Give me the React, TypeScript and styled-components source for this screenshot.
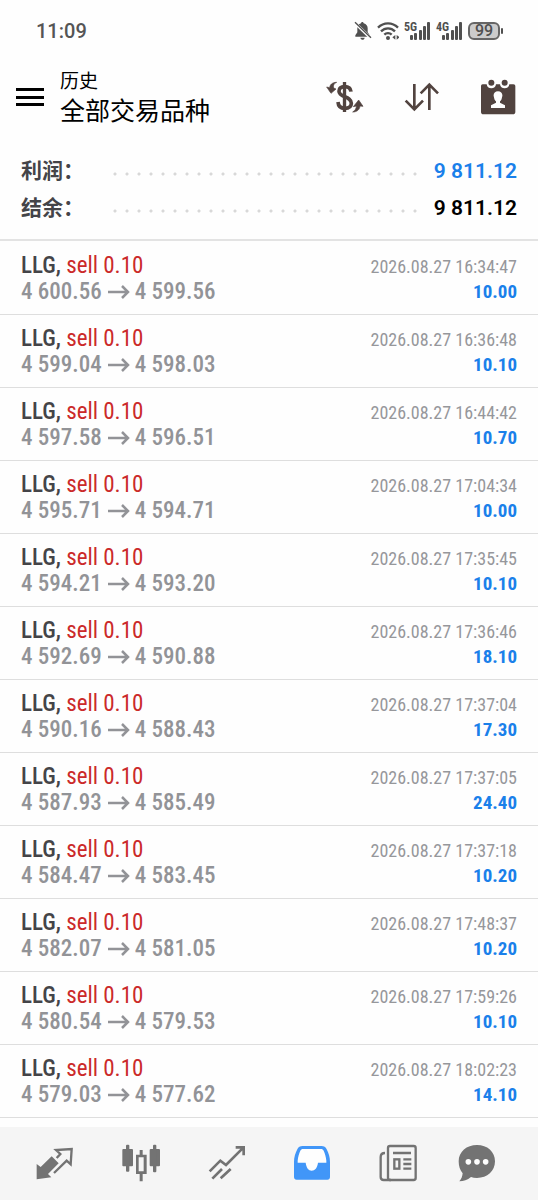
import React from 'react';
import styled, { createGlobalStyle } from 'styled-components';

const condensed = '"Roboto Condensed", "Liberation Sans Narrow", Roboto, "Noto Sans CJK SC", sans-serif';
const regular = 'Roboto, "Noto Sans CJK SC", sans-serif';

const GlobalStyle = createGlobalStyle`
  *, *::before, *::after { box-sizing: border-box; }
  body { margin: 0; background: #fefefe; color: #000; font-family: ${regular}; }
  h1, p, dl, dd, dt, ul { margin: 0; padding: 0; }
  svg { display: block; flex: none; }
`;

const Screen = styled.div`
  display: flex;
  flex-direction: column;
  min-height: 100vh;
`;

const StatusBar = styled.div`
  display: flex;
  align-items: center;
  justify-content: space-between;
  height: 62px;
  padding: 0 35px 0 36px;
  color: #555;
  font-size: 20px;
  font-weight: 500;
`;

const StatusIcons = styled.div`
  display: flex;
  align-items: center;
  gap: 5px;
  color: #505050;
`;

const Signal = styled.div`
  display: flex;
  align-items: flex-start;
  justify-content: flex-end;
  width: 27px;
  height: 18px;
  font: 700 12px/10px ${condensed};
  svg { margin-left: -7px; }
`;

const Battery = styled.div`
  display: flex;
  align-items: center;
  &::after {
    content: '';
    width: 2px;
    height: 6px;
    margin-left: 1px;
    border-radius: 1px;
    background: #505050;
  }
`;

const BatteryLevel = styled.span`
  width: 32px;
  height: 18px;
  border: 2px solid #666;
  border-radius: 6px;
  background: #ccc;
  font-size: 16px;
  line-height: 14px;
  text-align: center;
`;

const Header = styled.header`
  display: flex;
  align-items: center;
  height: 76px;
  padding: 0 22px 6px 14px;
`;

const IconButton = styled.button`
  display: grid;
  place-items: center;
  padding: 0;
  border: 0;
  background: none;
  color: #51433f;
  cursor: pointer;
`;

const MenuButton = styled(IconButton)`
  color: #000;
`;

const Titles = styled.div`
  flex: 1;
  padding: 4px 0 0 14px;
`;

const Overline = styled.p`
  font-size: 19px;
  line-height: 26px;
`;

const Title = styled.h1`
  font-size: 25px;
  font-weight: 400;
  line-height: 34px;
`;

const Actions = styled.div`
  display: flex;
  align-items: center;
  gap: 40px;
`;

const Summary = styled.dl`
  padding: 14px 21px 13px;
  border-bottom: 2px solid #e3e3e3;
`;

const SummaryRow = styled.div`
  display: flex;
  align-items: center;
  height: 37px;
`;

const SummaryLabel = styled.dt`
  width: 88px;
  padding-bottom: 4px;
  color: #444448;
  font-size: 21px;
  font-weight: 700;
`;

const Leader = styled.span`
  flex: 1;
  height: 4px;
  margin: 6px 16px 0 0;
  background: radial-gradient(circle, #d8d8d8 1px, transparent 2px) 0 0 / 12px 4px repeat-x;
`;

const SummaryValue = styled.dd<{ $accent?: boolean }>`
  color: ${(p) => (p.$accent ? '#1a80ea' : '#000')};
  font-size: 21px;
  font-weight: 600;
`;

const Deals = styled.ul`
  flex: 1;
  padding: 1px 0 9px;
  list-style: none;
`;

const Deal = styled.li`
  display: flex;
  justify-content: space-between;
  height: 73px;
  padding: 11px 21px 0;
  border-bottom: 1px solid #dedede;
  font-family: ${condensed};
  white-space: nowrap;
`;

const Column = styled.div<{ $end?: boolean }>`
  display: flex;
  flex-direction: column;
  align-items: ${(p) => (p.$end ? 'flex-end' : 'flex-start')};
  padding-top: ${(p) => (p.$end ? 1 : 0)}px;
`;

const Symbol = styled.p`
  color: #444448;
  font-size: 23px;
  font-weight: 500;
  line-height: 26px;
`;

const Side = styled.span`
  color: #cb2a2a;
  font-weight: 400;
`;

const Prices = styled.p`
  display: flex;
  align-items: center;
  gap: 5px;
  color: #929397;
  font-size: 23px;
  font-weight: 500;
  line-height: 26px;
`;

const Time = styled.time`
  color: #96979b;
  font-size: 18px;
  line-height: 25px;
`;

const Profit = styled.p`
  color: #1a80ea;
  font-size: 19px;
  font-weight: 700;
  line-height: 25px;
`;

const TabBar = styled.nav`
  position: sticky;
  bottom: 0;
  display: flex;
  height: 73px;
  padding: 0 25px 2px 12px;
  background: #f5f5f5;
`;

const Tab = styled(IconButton)<{ $active?: boolean }>`
  flex: 86 1 0;
  color: ${(p) => (p.$active ? '#4196f8' : '#737373')};
  &:last-child { flex-grow: 72; }
`;

const SignalBars = () => (
  <svg width="21" height="18" viewBox="0 0 21 18" fill="currentColor">
    <rect x="0" y="13" width="3" height="5" rx="1" />
    <rect x="4" y="11" width="3" height="7" rx="1" />
    <rect x="9" y="8" width="3" height="10" rx="1" />
    <rect x="13" y="4" width="3" height="14" rx="1" />
    <rect x="17" y="0" width="3" height="18" rx="1" />
  </svg>
);

const MutedBell = () => (
  <svg width="18" height="20" viewBox="0 0 54 60" fill="currentColor">
    <path d="M25 3c2 0 4 2 4 4 8 2 12 8 12 15v11l6 10v4H4v-4l6-9V22c0-8 4-13 11-15 0-2 2-4 4-4zM19 50h13c-1 4-3 6-6 6s-6-2-7-6z" />
    <path d="M3 6l48 46" stroke="#fefefe" strokeWidth="9" />
    <path d="M3 4l48 46" stroke="currentColor" strokeWidth="4" />
  </svg>
);

const Wifi = () => (
  <svg width="22" height="18" viewBox="0 0 66 54" fill="none" stroke="currentColor" strokeWidth="7">
    <path d="M3 17c17-17 43-17 60 0M12 28c12-12 30-12 42 0M22 38c6-6 16-6 22 0" />
    <circle cx="33" cy="48" r="6" fill="currentColor" stroke="none" />
    <path d="M46 46l9-7v14zM68 46l-9-7v14z" fill="currentColor" stroke="none" />
  </svg>
);

const MenuIcon = () => (
  <svg width="32" height="24" viewBox="0 0 32 24" fill="currentColor">
    <path d="M2 3h28v3H2zM2 11h28v3H2zM2 18h28v3H2z" />
  </svg>
);

const CurrencyIcon = () => (
  <svg width="38" height="36" viewBox="45 237 114 108" fill="none" stroke="currentColor">
    <path d="M120 275c-1-10-7-15-19-15-11 0-17 5-17 14 0 20 37 13 37 36 0 9-7 15-20 15-12 0-19-6-20-19" strokeWidth="11" />
    <path d="M100.500 246v90" strokeWidth="10" />
    <path d="M77 247c-9 4-11 10-9 17l7 3-15 13-13-19 9 2c1-9 8-16 21-16zM125 336c8-5 11-11 11-18l-9 2 16-20 13 19-9-1c-1 11-9 18-22 18z" fill="currentColor" strokeWidth="2" />
  </svg>
);

const SortIcon = () => (
  <svg width="36" height="36" viewBox="281 237 108 108" fill="none" stroke="currentColor" strokeWidth="8">
    <path d="M312 252v76M286 302l26 26 26-26M357 330v-76M331 280l26-26 26 26" />
  </svg>
);

const CalendarIcon = () => (
  <svg width="36" height="36" viewBox="511 235 108 108" fill="currentColor">
    <path fillRule="evenodd" d="M519 251h12c1 8 6 12 14 12s13-4 14-12h12c1 8 6 12 14 12s13-4 14-12h12c4 0 6 2 6 6v77c0 4-3 7-7 7h-89c-4 0-7-3-7-7v-77c0-4 2-6 5-6zM565 272c-9 0-14 6-13 14l2 8c1 4 3 6 5 8v4l-15 8v8h42v-8l-15-8v-4c2-2 4-4 5-8l2-8c1-8-4-14-13-14z" />
    <circle cx="545" cy="246" r="9" />
    <circle cx="585" cy="246" r="9" />
  </svg>
);

const TradeIcon = () => (
  <svg width="38" height="38" viewBox="108 102 114 114" fill="none" stroke="currentColor" strokeWidth="7">
    <path d="M110 162l12 9 33-32 21 21-32 32 10 10-44 6z" fill="currentColor" stroke="none" />
    <path d="M170 144l11-12-13-12 47-3-3 46-12-11-38 37" />
  </svg>
);

const CandlesIcon = () => (
  <svg width="40" height="38" viewBox="360 102 120 114" fill="currentColor">
    <rect x="364" y="117" width="32" height="52" rx="3" />
    <rect x="375" y="104" width="10" height="81" rx="3" />
    <rect x="446" y="117" width="31" height="52" rx="3" />
    <rect x="456" y="104" width="10" height="83" rx="3" />
    <path fillRule="evenodd" d="M416 120h9v14h12v58h-12v22h-9v-22h-11v-58h11zM413 142v42h15v-42z" />
  </svg>
);

const TrendIcon = () => (
  <svg width="38" height="38" viewBox="622 102 114 114" fill="none" stroke="currentColor" strokeWidth="8">
    <path d="M627 184l32-32 17 13 52-52M705 112h24v24M635 206l29-29M660 205l30-28" />
  </svg>
);

const InboxIcon = () => (
  <svg width="38" height="38" viewBox="69 101 114 114" fill="currentColor">
    <path d="M98 112h56l14 10 8 36-24 4-26 22-26-22-22-4 8-36z" fill="#fefefe" />
    <path fillRule="evenodd" d="M98 107h56c8 0 13 3 16 10 6 12 10 24 10 38v45c0 5-3 8-8 8H80c-5 0-8-3-8-8v-45c0-14 4-26 10-38 3-7 8-10 16-10zM99 116c-4 0-6 2-8 5-4 9-7 19-8 30v6h24c2 15 8 24 18 24s17-9 19-24h25v-6c-1-11-4-21-8-30-2-3-4-5-8-5z" />
  </svg>
);

const NewsIcon = () => (
  <svg width="38" height="38" viewBox="328 101 114 114" fill="none" stroke="currentColor" strokeWidth="7">
    <rect x="355" y="107" width="83" height="102" rx="6" />
    <path d="M346 128c-10 0-13 4-13 12v60c0 6 3 9 9 9h22M370 128h54M401 147h24M401 161h24M401 175h24" />
    <rect x="374" y="147" width="15" height="28" />
  </svg>
);

const ChatIcon = () => (
  <svg width="38" height="38" viewBox="565 101 114 114" fill="currentColor">
    <path d="M590 146h64v18h-64z" fill="#fefefe" />
    <path fillRule="evenodd" d="M622 104c31 0 54 20 54 49s-23 50-54 50c-7 0-13-1-18-3-11 9-22 13-35 13 6-6 9-14 10-24-8-9-12-21-12-36 0-29 24-49 55-49zM596 146a8 8 0 1 0 0 17 8 8 0 0 0 0-17zM622 146a8 8 0 1 0 0 17 8 8 0 0 0 0-17zM648 146a8 8 0 1 0 0 17 8 8 0 0 0 0-17z" />
  </svg>
);

const Arrow = () => (
  <svg width="23" height="16" viewBox="0 0 23 16" fill="none" stroke="currentColor" strokeWidth="2.500">
    <path d="M1 8h20M15 2l6 6-6 6" />
  </svg>
);

const deals = [
  ['4 600.56', '4 599.56', '16:34:47', '10.00'],
  ['4 599.04', '4 598.03', '16:36:48', '10.10'],
  ['4 597.58', '4 596.51', '16:44:42', '10.70'],
  ['4 595.71', '4 594.71', '17:04:34', '10.00'],
  ['4 594.21', '4 593.20', '17:35:45', '10.10'],
  ['4 592.69', '4 590.88', '17:36:46', '18.10'],
  ['4 590.16', '4 588.43', '17:37:04', '17.30'],
  ['4 587.93', '4 585.49', '17:37:05', '24.40'],
  ['4 584.47', '4 583.45', '17:37:18', '10.20'],
  ['4 582.07', '4 581.05', '17:48:37', '10.20'],
  ['4 580.54', '4 579.53', '17:59:26', '10.10'],
  ['4 579.03', '4 577.62', '18:02:23', '14.10'],
];

const tabs = [
  { label: '交易', Icon: TradeIcon },
  { label: '行情', Icon: CandlesIcon },
  { label: '图表', Icon: TrendIcon },
  { label: '历史', Icon: InboxIcon, active: true },
  { label: '新闻', Icon: NewsIcon },
  { label: '消息', Icon: ChatIcon },
];

export default function App() {
  return (
    <Screen>
      <GlobalStyle />
      <StatusBar>
        <span>11:09</span>
        <StatusIcons>
          <MutedBell />
          <Wifi />
          <Signal>5G<SignalBars /></Signal>
          <Signal>4G<SignalBars /></Signal>
          <Battery><BatteryLevel>99</BatteryLevel></Battery>
        </StatusIcons>
      </StatusBar>
      <Header>
        <MenuButton aria-label="菜单"><MenuIcon /></MenuButton>
        <Titles>
          <Overline>历史</Overline>
          <Title>全部交易品种</Title>
        </Titles>
        <Actions>
          <IconButton aria-label="货币"><CurrencyIcon /></IconButton>
          <IconButton aria-label="排序"><SortIcon /></IconButton>
          <IconButton aria-label="日期"><CalendarIcon /></IconButton>
        </Actions>
      </Header>
      <Summary>
        <SummaryRow>
          <SummaryLabel>利润：</SummaryLabel>
          <Leader />
          <SummaryValue $accent>9 811.12</SummaryValue>
        </SummaryRow>
        <SummaryRow>
          <SummaryLabel>结余：</SummaryLabel>
          <Leader />
          <SummaryValue>9 811.12</SummaryValue>
        </SummaryRow>
      </Summary>
      <Deals>
        {deals.map(([open, close, time, profit]) => (
          <Deal key={time}>
            <Column>
              <Symbol>LLG, <Side>sell 0.10</Side></Symbol>
              <Prices>{open}<Arrow />{close}</Prices>
            </Column>
            <Column $end>
              <Time>2026.08.27 {time}</Time>
              <Profit>{profit}</Profit>
            </Column>
          </Deal>
        ))}
      </Deals>
      <TabBar>
        {tabs.map(({ label, Icon, active }) => (
          <Tab key={label} aria-label={label} $active={active}><Icon /></Tab>
        ))}
      </TabBar>
    </Screen>
  );
}
